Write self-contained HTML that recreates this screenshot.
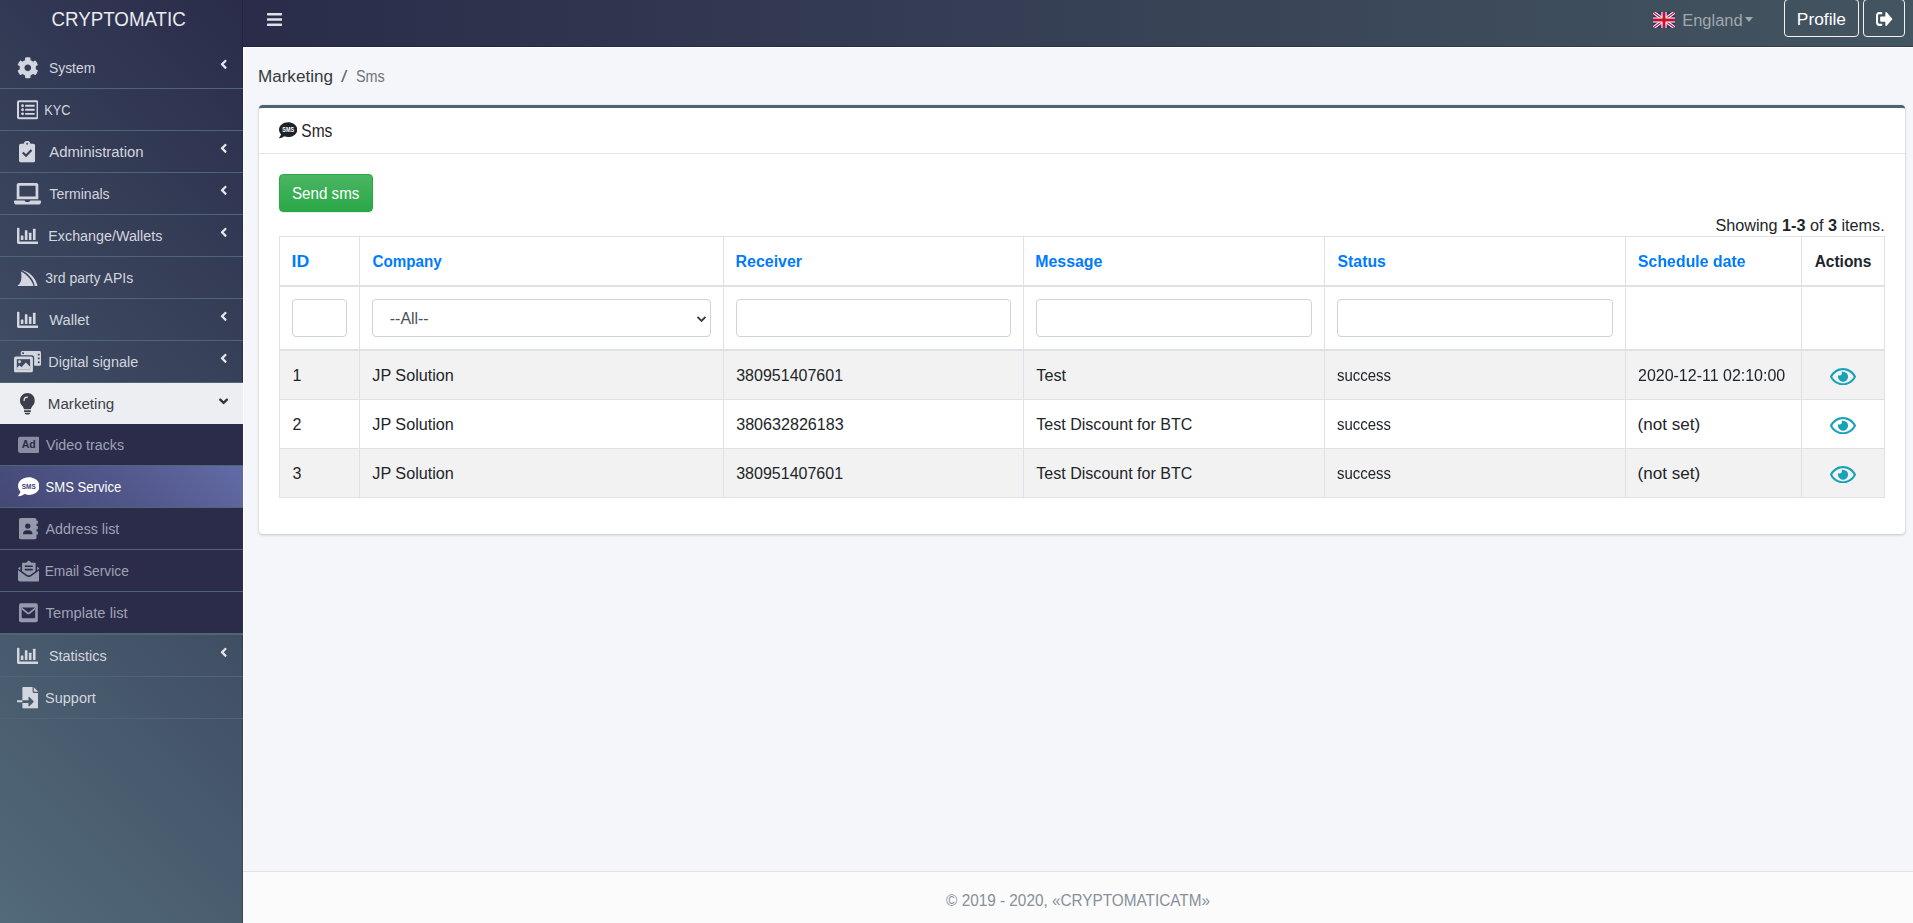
<!DOCTYPE html>
<html lang="en">
<head>
<meta charset="utf-8">
<title>Sms - CRYPTOMATIC</title>
<style>
*{box-sizing:border-box}
html,body{margin:0;padding:0}
body{width:1913px;height:923px;overflow:hidden;position:relative;background:#f4f6f9;
  font-family:"Liberation Sans","DejaVu Sans",sans-serif;font-size:16px;line-height:24px;color:#212529}
a{text-decoration:none;color:inherit}
ul{list-style:none;margin:0;padding:0}
.t{display:inline-block;white-space:nowrap;transform-origin:0 50%}
svg{display:block}

/* ---------- sidebar ---------- */
.sidebar{position:absolute;left:0;top:0;width:243px;height:923px;z-index:2;box-shadow:inset -1px 0 0 rgba(10,16,40,.28);
  background:linear-gradient(45deg,#526a79 0%,#2a2c4a 100%);}
.brand{display:block;height:47px;color:#e9ebf0;font-size:20px;line-height:47px;position:relative}
.brand .t{position:absolute;left:51.5px;top:-3.6px}
.menu>li{border-bottom:1px solid #4d6575;position:relative}
.menu>li>a{display:block;height:41px;line-height:41px;font-size:14px;color:#d3d6df;position:relative}
.menu a .ic{position:absolute;left:0;top:0;width:55px;height:41px}
.menu a .ic svg{position:absolute}
.menu a .t{position:absolute;top:1.3px;left:48.6px}
.menu a.noarr .t{left:45.4px}
.menu a .arr{position:absolute;left:219.9px;top:10.4px;width:7.4px;height:14.7px;color:#e4e6ec}
.menu li.open>a{background:#edeef1;color:#3a3f4b}
.menu li.open>a .arr{left:219.1px;top:10.7px;width:9.2px;height:14.7px;color:#2f3440}
.sub{background:#2a2c4a}
.sub>li{border-bottom:1px solid #4d6575;height:42px}
.sub a .ic{left:1.1px;top:0.3px;color:#9499ac}
.sub>li>a{display:block;height:41px;line-height:41px;font-size:14px;color:#9ea3b5;position:relative}
.sub>li>a .t{left:46px}
.sub>li.active>a .ic{color:#fff}
.sub>li.active>a{background:linear-gradient(45deg,#434874 0%,#51578a 50%,#636ba7 100%);color:#fff}

/* ---------- navbar ---------- */
.navbar{position:absolute;left:243px;top:0;width:1670px;height:47px;
  background:linear-gradient(90deg,#2a2c4a 0%,#435560 100%);box-shadow:inset 0 -1px 0 rgba(10,16,40,.3)}
.burger{position:absolute;left:23.5px;top:12.7px;width:15px;height:13px}
.lang{position:absolute;left:1409.5px;top:0;height:47px;color:#a0a7af;font-size:16px}
.lang .flag{position:absolute;left:0;top:12px;width:22px;height:16px}
.lang .t{position:absolute;left:30px;top:9.4px;line-height:24px}
.lang .caret{position:absolute;left:92.8px;top:17.2px;width:0;height:0;border-left:4.9px solid transparent;border-right:4.9px solid transparent;border-top:5px solid #a0a7af}
.nbtn{position:absolute;top:-1px;height:38px;border:1px solid #f1f3f5;border-radius:4px;color:#fff;font-size:16px}
.nbtn.profile{left:1540.6px;width:75.4px}
.nbtn.profile .t{position:absolute;left:13px;top:7.6px;line-height:24px}
.nbtn.logout{left:1620px;width:41.8px}
.nbtn.logout svg{position:absolute;left:12px;top:11.6px;width:16.6px;height:14px}

/* ---------- content ---------- */
.wrap{position:absolute;left:243px;top:47px;width:1670px;height:824px;border-left:1px solid #fff;border-top:1px solid #fff;background:#f4f6f9}
.crumbs{position:absolute;left:259px;top:65px;height:24px;font-size:16px;line-height:24px;color:#343a40;white-space:nowrap}
.crumbs .t{position:absolute;top:0}
.crumbs .sep,.crumbs .cur{color:#6c757d}
.card{position:absolute;left:259px;top:105px;width:1646px;height:429px;background:#fff;border-top:3px solid #4b6373;border-radius:4px;
  box-shadow:0 0 1px rgba(0,0,0,.125),0 1px 3px rgba(0,0,0,.2)}
.card-header{position:relative;height:46px;border-bottom:1px solid #e4e6e9}
.card-header svg{position:absolute;left:19.7px;top:12.8px;width:18.3px;height:18.3px}
.card-header .t{position:absolute;left:42.2px;top:10.6px;font-size:17.6px;line-height:24px;color:#1f2327}
.btn{position:absolute;left:20px;top:66px;width:94px;height:38px;border-radius:4px;border:1px solid #28a745;
  background:linear-gradient(180deg,#4bb563,#2aa847);color:#fff;box-shadow:0 1px 1px rgba(0,0,0,.075)}
.btn .t{position:absolute;left:12.2px;top:6.8px;line-height:24px}
.summary{position:absolute;left:1457.4px;top:105.8px;line-height:24px;white-space:nowrap}
.summary b{font-weight:700}

table.grid{position:absolute;left:20px;top:128px;width:1606px;border-collapse:separate;border-spacing:0;table-layout:fixed;
  border-left:1px solid #dee2e6;border-top:1px solid #dee2e6}
.grid th,.grid td{border-right:1px solid #dee2e6;border-bottom:1px solid #dee2e6;padding:0 0 0 12px;text-align:left;vertical-align:middle;
  font-weight:400;line-height:24px;white-space:nowrap;overflow:hidden}
.grid thead th{height:50px;border-bottom-width:2px;font-weight:700;color:#007bff}
.grid thead th.plain{color:#212529}
.grid thead td{height:64px;border-bottom-width:2px}
.grid tbody td{height:49px}
.grid tbody tr:nth-child(odd) td{background:#f2f2f2}
.grid th .t,.grid td .t{position:relative;top:1.4px}
.inp{display:block;height:38px;border:1px solid #ced4da;border-radius:4px;background:#fff;position:relative}
.inp.sel .t{position:absolute;left:16.6px;top:6.8px;color:#495057}
.inp.sel svg{position:absolute;right:3.4px;top:14.6px;width:11px;height:8px}
.eye{width:26px;height:17.4px;margin-left:16.1px;position:relative;top:1.7px}

.footer{position:absolute;left:243px;top:871px;width:1670px;height:52px;background:#fbfbfc;border-top:1px solid #dee2e6;color:#869099}
.footer .t{position:absolute;left:703px;top:17px;line-height:24px}
</style>
</head>
<body>
<aside class="sidebar">
  <a class="brand" href="#"><span class="t" style="transform:translateX(-0.54px) scaleX(0.9372)">CRYPTOMATIC</span></a>
  <ul class="menu">
    <li><a href="#"><span class="ic"><svg style="left:16.7px;top:10.2px" width="21.6" height="21.6" viewBox="0 0 512 512" fill="currentColor"><path d="M487.4 315.7l-42.600-24.600c4.300-23.200 4.300-47 0-70.200l42.600-24.600c4.900-2.800 7.100-8.600 5.500-14-11.100-35.600-30-67.800-54.700-94.600-3.800-4.100-10-5.100-14.800-2.300L380.800 110c-17.900-15.400-38.500-27.300-60.800-35.100V25.800c0-5.600-3.900-10.500-9.400-11.700-36.700-8.200-74.300-7.800-109.200 0-5.500 1.200-9.400 6.100-9.400 11.700V75c-22.200 7.900-42.800 19.800-60.800 35.100L88.700 85.500c-4.900-2.800-11-1.900-14.800 2.300-24.700 26.700-43.600 58.900-54.700 94.600-1.700 5.400.6 11.200 5.500 14L67.300 221c-4.300 23.200-4.300 47 0 70.200l-42.600 24.600c-4.900 2.800-7.100 8.600-5.500 14 11.100 35.600 30 67.800 54.700 94.600 3.800 4.100 10 5.100 14.800 2.300l42.600-24.600c17.900 15.400 38.500 27.300 60.800 35.100v49.200c0 5.600 3.900 10.500 9.400 11.700 36.700 8.200 74.300 7.800 109.200 0 5.500-1.200 9.400-6.100 9.400-11.700v-49.200c22.200-7.900 42.800-19.800 60.800-35.100l42.600 24.600c4.900 2.800 11 1.900 14.800-2.300 24.700-26.700 43.600-58.900 54.700-94.600 1.500-5.500-.7-11.300-5.600-14.100zM256 336c-44.100 0-80-35.900-80-80s35.900-80 80-80 80 35.900 80 80-35.900 80-80 80z"/></svg></span><span class="t" style="transform:translateX(-0.09px) scaleX(0.9932)">System</span><svg class="arr" viewBox="0 0 256 512" fill="currentColor"><path d="M31.700 239l136-136c9.400-9.400 24.600-9.400 33.900 0l22.600 22.600c9.400 9.400 9.400 24.600 0 33.900L127.900 256l96.400 96.400c9.400 9.400 9.400 24.600 0 33.900L201.700 409c-9.400 9.400-24.600 9.400-33.900 0l-136-136c-9.500-9.400-9.500-24.600-.1-34z"/></svg></a></li>
    <li><a href="#" class="noarr"><span class="ic"><svg style="left:16.7px;top:10.2px" width="21.6" height="21.6" viewBox="0 0 512 512" fill="currentColor"><rect x="24" y="56" width="464" height="400" rx="26" fill="none" stroke="currentColor" stroke-width="48"/><circle cx="132" cy="160" r="34"/><circle cx="132" cy="256" r="34"/><circle cx="132" cy="352" r="34"/><rect x="192" y="138" width="228" height="44" rx="10"/><rect x="192" y="234" width="228" height="44" rx="10"/><rect x="192" y="330" width="228" height="44" rx="10"/></svg></span><span class="t" style="transform:translateX(-0.81px) scaleX(0.9178)">KYC</span></a></li>
    <li><a href="#"><span class="ic"><svg style="left:19.4px;top:10.2px" width="16.2" height="21.6" viewBox="0 0 384 512" fill="currentColor"><mask id="mk1"><rect width="384" height="512" fill="#fff"/><circle cx="192" cy="64" r="22" fill="#000"/><path d="M108 290l58 58 112-118" fill="none" stroke="#000" stroke-width="52" stroke-linecap="square"/></mask><g mask="url(#mk1)"><rect x="0" y="64" width="384" height="448" rx="48"/><path d="M120 64a72 64 0 0 1 144 0h30v64H90V64z"/><circle cx="192" cy="62" r="62"/></g></svg></span><span class="t" style="transform:translateX(0.21px) scaleX(1.0646)">Administration</span><svg class="arr" viewBox="0 0 256 512" fill="currentColor"><path d="M31.700 239l136-136c9.400-9.400 24.600-9.400 33.900 0l22.600 22.600c9.400 9.400 9.400 24.600 0 33.900L127.900 256l96.400 96.400c9.400 9.400 9.400 24.600 0 33.900L201.700 409c-9.400 9.400-24.600 9.400-33.900 0l-136-136c-9.500-9.400-9.500-24.600-.1-34z"/></svg></a></li>
    <li><a href="#"><span class="ic"><svg style="left:14px;top:10.2px" width="27" height="21.6" viewBox="0 0 640 512" fill="currentColor"><path d="M624 416H381.540c-.74 19.810-14.710 32-32.740 32H288c-18.690 0-33.020-17.470-32.770-32H16c-8.800 0-16 7.200-16 16v16c0 35.200 28.800 64 64 64h512c35.200 0 64-28.800 64-64v-16c0-8.800-7.200-16-16-16zM576 48c0-26.400-21.600-48-48-48H112C85.600 0 64 21.600 64 48v336h512V48zm-64 272H128V64h384v256z"/></svg></span><span class="t" style="transform:translateX(0.41px) scaleX(1.0050)">Terminals</span><svg class="arr" viewBox="0 0 256 512" fill="currentColor"><path d="M31.700 239l136-136c9.400-9.400 24.600-9.400 33.900 0l22.600 22.600c9.400 9.400 9.400 24.600 0 33.900L127.900 256l96.400 96.400c9.400 9.400 9.400 24.600 0 33.900L201.700 409c-9.400 9.400-24.600 9.400-33.900 0l-136-136c-9.500-9.400-9.500-24.600-.1-34z"/></svg></a></li>
    <li><a href="#"><span class="ic"><svg style="left:16.700px;top:10.200px" width="21.600" height="21.600" viewBox="0 0 512 512" fill="currentColor"><path d="M0 80a16 16 0 0 1 16-16h26a16 16 0 0 1 16 16v310h438a16 16 0 0 1 16 16v26a16 16 0 0 1-16 16H32a32 32 0 0 1-32-32z"/><rect x="90" y="250" width="62" height="108" rx="12"/><rect x="186" y="122" width="62" height="236" rx="12"/><rect x="282" y="186" width="62" height="172" rx="12"/><rect x="378" y="90" width="62" height="268" rx="12"/></svg></span><span class="t" style="transform:translateX(-0.72px) scaleX(1.0223)">Exchange/Wallets</span><svg class="arr" viewBox="0 0 256 512" fill="currentColor"><path d="M31.700 239l136-136c9.400-9.400 24.600-9.400 33.900 0l22.600 22.600c9.400 9.400 9.400 24.600 0 33.900L127.900 256l96.400 96.400c9.400 9.400 9.400 24.600 0 33.900L201.700 409c-9.400 9.400-24.600 9.400-33.900 0l-136-136c-9.500-9.400-9.500-24.600-.1-34z"/></svg></a></li>
    <li><a href="#" class="noarr"><span class="ic"><svg style="left:17.4px;top:12.6px" width="20.6" height="16.2" viewBox="0 0 206 162" fill="currentColor"><path d="M44 0C124 14 190 78 206 162H178C168 98 118 36 44 0z"/><path d="M40 16C102 48 152 104 166 162H0C32 142 54 106 40 16z"/></svg></span><span class="t" style="transform:translateX(0.31px) scaleX(0.9988)">3rd party APIs</span></a></li>
    <li><a href="#"><span class="ic"><svg style="left:16.700px;top:10.200px" width="21.600" height="21.600" viewBox="0 0 512 512" fill="currentColor"><path d="M0 80a16 16 0 0 1 16-16h26a16 16 0 0 1 16 16v310h438a16 16 0 0 1 16 16v26a16 16 0 0 1-16 16H32a32 32 0 0 1-32-32z"/><rect x="90" y="250" width="62" height="108" rx="12"/><rect x="186" y="122" width="62" height="236" rx="12"/><rect x="282" y="186" width="62" height="172" rx="12"/><rect x="378" y="90" width="62" height="268" rx="12"/></svg></span><span class="t" style="transform:translateX(0.31px) scaleX(1.0445)">Wallet</span><svg class="arr" viewBox="0 0 256 512" fill="currentColor"><path d="M31.700 239l136-136c9.400-9.400 24.600-9.400 33.900 0l22.600 22.600c9.400 9.400 9.400 24.600 0 33.900L127.900 256l96.400 96.400c9.400 9.400 9.400 24.600 0 33.900L201.700 409c-9.400 9.400-24.600 9.400-33.900 0l-136-136c-9.500-9.400-9.500-24.600-.1-34z"/></svg></a></li>
    <li><a href="#"><span class="ic"><svg style="left:14px;top:10.2px" width="27" height="21.6" viewBox="0 0 640 512" fill="currentColor"><mask id="mk2"><rect width="640" height="512" fill="#fff"/><rect x="-30" y="98" width="508" height="444" rx="60" fill="#000"/><rect x="564" y="64" width="44" height="44" rx="8" fill="#000"/><rect x="564" y="154" width="44" height="44" rx="8" fill="#000"/><rect x="564" y="244" width="44" height="44" rx="8" fill="#000"/><rect x="192" y="32" width="44" height="40" rx="8" fill="#000"/></mask><rect x="160" y="0" width="480" height="352" rx="36" mask="url(#mk2)"/><mask id="mk3"><rect width="640" height="512" fill="#fff"/><rect x="66" y="194" width="316" height="252" fill="#000"/><circle cx="132" cy="256" r="34" fill="#fff"/><path d="M66 446v-44l64-64 46 46 104-112 102 104v70z" fill="#fff"/></mask><rect x="0" y="128" width="448" height="384" rx="44" mask="url(#mk3)"/></svg></span><span class="t" style="transform:translateX(-0.73px) scaleX(1.0316)">Digital signale</span><svg class="arr" viewBox="0 0 256 512" fill="currentColor"><path d="M31.700 239l136-136c9.400-9.400 24.600-9.400 33.900 0l22.600 22.600c9.400 9.400 9.400 24.600 0 33.900L127.900 256l96.400 96.400c9.400 9.400 9.400 24.600 0 33.900L201.700 409c-9.400 9.400-24.600 9.400-33.900 0l-136-136c-9.500-9.400-9.500-24.600-.1-34z"/></svg></a></li>
    <li class="open"><a href="#"><span class="ic"><svg style="left:20.1px;top:10.2px" width="14.85" height="21.6" viewBox="0 0 352 512" fill="currentColor"><mask id="mk4"><rect width="352" height="512" fill="#fff"/><path d="M96 176a80 80 0 0 1 80-80" fill="none" stroke="#000" stroke-width="30" stroke-linecap="round"/></mask><path mask="url(#mk4)" d="M176 0C78 0 0 78 0 176c0 46 16 86 46 118 20 22 50 68 50 90h160c0-22 30-68 50-90 30-32 46-72 46-118C352 78 274 0 176 0z"/><rect x="96" y="408" width="160" height="44" rx="6"/><path d="M106 466h140l-18 34a24 24 0 0 1-20 12h-64a24 24 0 0 1-20-12z"/></svg></span><span class="t" style="transform:translateX(-1.17px) scaleX(1.0807)">Marketing</span><svg class="arr" viewBox="0 0 320 512" fill="currentColor"><path d="M143 352.300L7 216.300c-9.400-9.400-9.400-24.600 0-33.900l22.600-22.600c9.400-9.400 24.600-9.400 33.900 0l96.400 96.400 96.400-96.400c9.400-9.400 24.600-9.400 33.900 0l22.600 22.600c9.400 9.400 9.400 24.600 0 33.900l-136 136c-9.200 9.400-24.400 9.400-33.800 0z"/></svg></a>
      <ul class="sub">
        <li><a href="#" class="noarr"><span class="ic"><svg style="left:16.7px;top:9.6px" width="21.6" height="21.6" viewBox="0 0 512 512"><rect x="0" y="64" width="512" height="384" rx="48" fill="#888da2"/><text x="256" y="340" text-anchor="middle" font-family="Liberation Sans, sans-serif" font-weight="700" font-size="250" fill="#2a2c4a">Ad</text></svg></span><span class="t" style="transform:translateX(0.91px) scaleX(1.0172)">Video tracks</span></a></li>
        <li class="active"><a href="#" class="noarr"><span class="ic"><svg style="left:16.7px;top:10.2px" width="21.6" height="21.6" viewBox="0 0 512 512"><path fill="currentColor" d="M256 32C114.600 32 0 125.100 0 240c0 49.600 21.400 95 57 130.700C44.500 421.100 2.700 466 2.200 466.500c-2.200 2.300-2.800 5.700-1.500 8.700S4.800 480 8 480c66.300 0 116-31.800 140.600-51.400 32.700 12.300 69 19.400 107.400 19.400 141.400 0 256-93.100 256-208S397.400 32 256 32z"/><text x="256" y="306" text-anchor="middle" textLength="330" lengthAdjust="spacingAndGlyphs" font-family="Liberation Sans, sans-serif" font-weight="700" font-size="186" fill="#3d4275">SMS</text></svg></span><span class="t" style="transform:translateX(0.61px) scaleX(0.9344)">SMS Service</span></a></li>
        <li><a href="#" class="noarr"><span class="ic"><svg style="left:18.1px;top:10.2px" width="18.9" height="21.6" viewBox="0 0 448 512" fill="currentColor"><mask id="mk5"><rect width="448" height="512" fill="#fff"/><circle cx="208" cy="192" r="64" fill="#000"/><path d="M96 372c0-50 40-84 80-84h64c40 0 80 34 80 84v12H96z" fill="#000"/></mask><rect x="0" y="0" width="416" height="512" rx="48" mask="url(#mk5)"/><rect x="400" y="64" width="48" height="72" rx="12"/><rect x="400" y="192" width="48" height="72" rx="12"/><rect x="400" y="320" width="48" height="72" rx="12"/></svg></span><span class="t" style="transform:translateX(0.61px) scaleX(1.0184)">Address list</span></a></li>
        <li><a href="#" class="noarr"><span class="ic"><svg style="left:16.7px;top:10.2px" width="21.6" height="21.6" viewBox="0 0 512 512" fill="currentColor"><mask id="mk6"><rect width="512" height="512" fill="#fff"/><rect x="160" y="128" width="192" height="40" rx="10" fill="#000"/><rect x="160" y="208" width="192" height="40" rx="10" fill="#000"/></mask><path mask="url(#mk6)" d="M96 64h100l40-40c12-12 28-12 40 0l40 40h100v200l-116 84c-28 20-60 20-88 0L96 264z"/><path d="M0 200l56-48v92zM512 200l-56-48v92z"/><path d="M0 240l190 140c40 28 92 28 132 0l190-140v224a48 48 0 0 1-48 48H48a48 48 0 0 1-48-48z"/></svg></span><span class="t" style="transform:translateX(-0.37px) scaleX(0.9836)">Email Service</span></a></li>
        <li><a href="#" class="noarr"><span class="ic"><svg style="left:18.1px;top:10.2px" width="18.9" height="21.6" viewBox="0 0 448 512" fill="currentColor"><mask id="mk7"><rect width="448" height="512" fill="#fff"/><rect x="64" y="128" width="320" height="256" rx="20" fill="#000"/><path d="M64 152l136 108c14 11 34 11 48 0l136-108" fill="none" stroke="#fff" stroke-width="40"/></mask><rect x="0" y="32" width="448" height="448" rx="48" mask="url(#mk7)"/></svg></span><span class="t" style="transform:translateX(0.61px) scaleX(1.0550)">Template list</span></a></li>
      </ul>
    </li>
    <li><a href="#"><span class="ic"><svg style="left:16.700px;top:10.200px" width="21.600" height="21.600" viewBox="0 0 512 512" fill="currentColor"><path d="M0 80a16 16 0 0 1 16-16h26a16 16 0 0 1 16 16v310h438a16 16 0 0 1 16 16v26a16 16 0 0 1-16 16H32a32 32 0 0 1-32-32z"/><rect x="90" y="250" width="62" height="108" rx="12"/><rect x="186" y="122" width="62" height="236" rx="12"/><rect x="282" y="186" width="62" height="172" rx="12"/><rect x="378" y="90" width="62" height="268" rx="12"/></svg></span><span class="t" style="transform:translateX(-0.09px) scaleX(1.0301)">Statistics</span><svg class="arr" viewBox="0 0 256 512" fill="currentColor"><path d="M31.700 239l136-136c9.400-9.400 24.600-9.400 33.900 0l22.600 22.600c9.400 9.400 9.400 24.600 0 33.900L127.900 256l96.400 96.400c9.400 9.400 9.400 24.600 0 33.900L201.700 409c-9.400 9.400-24.600 9.400-33.900 0l-136-136c-9.500-9.400-9.500-24.600-.1-34z"/></svg></a></li>
    <li><a href="#" class="noarr"><span class="ic"><svg style="left:16.7px;top:10.2px" width="21.6" height="21.6" viewBox="0 0 512 512" fill="currentColor"><mask id="mk8"><rect width="512" height="512" fill="#fff"/><path d="M384 0v104a24 24 0 0 0 24 24h104" fill="none" stroke="#000" stroke-width="28"/><path d="M100 312h172v-66c0-12 14-18 22-10l100 100c6 6 6 14 0 20l-100 100c-8 8-22 2-22-10v-66H100z" fill="#000"/></mask><path mask="url(#mk8)" d="M152 0h240l120 120v368a24 24 0 0 1-24 24H152a24 24 0 0 1-24-24V24a24 24 0 0 1 24-24z"/><rect x="0" y="312" width="128" height="48" rx="10"/></svg></span><span class="t" style="transform:translateX(0.11px) scaleX(1.0337)">Support</span></a></li>
  </ul>
</aside>

<nav class="navbar">
  <a href="#" class="burger"><svg width="15" height="13" viewBox="0 60 448 392" preserveAspectRatio="none" fill="#dfe1e8"><path d="M16 132h416c8.837 0 16-7.163 16-16V76c0-8.837-7.163-16-16-16H16C7.163 60 0 67.163 0 76v40c0 8.837 7.163 16 16 16zm0 160h416c8.837 0 16-7.163 16-16v-40c0-8.837-7.163-16-16-16H16c-8.837 0-16 7.163-16 16v40c0 8.837 7.163 16 16 16zm0 160h416c8.837 0 16-7.163 16-16v-40c0-8.837-7.163-16-16-16H16c-8.837 0-16 7.163-16 16v40c0 8.837 7.163 16 16 16z"/></svg></a>
  <div class="lang">
    <svg class="flag" viewBox="0 0 60 44" preserveAspectRatio="none"><rect width="60" height="44" fill="#2d3179"/><path d="M0 0L60 44M60 0L0 44" stroke="#fff" stroke-width="9"/><path d="M0 0L60 44M60 0L0 44" stroke="#c8102e" stroke-width="3.4"/><path d="M30 0V44M0 22H60" stroke="#fff" stroke-width="14"/><path d="M30 0V44M0 22H60" stroke="#c8102e" stroke-width="8"/></svg>
    <span class="t" style="transform:translateX(-0.83px) scaleX(1.0296)">England</span><span class="caret"></span>
  </div>
  <a href="#" class="nbtn profile"><span class="t" style="transform:translateX(-1.18px) scaleX(1.0843)">Profile</span></a>
  <a href="#" class="nbtn logout"><svg viewBox="0 64 512 384" preserveAspectRatio="none" fill="#fff"><path d="M497 273L329 441c-15 15-41 4.500-41-17v-96H152c-13.300 0-24-10.700-24-24v-96c0-13.300 10.700-24 24-24h136V88c0-21.400 25.900-32 41-17l168 168c9.300 9.400 9.300 24.600 0 34zM192 436v-40c0-6.600-5.400-12-12-12H96c-17.700 0-32-14.300-32-32V160c0-17.700 14.300-32 32-32h84c6.600 0 12-5.400 12-12V76c0-6.600-5.400-12-12-12H96c-53 0-96 43-96 96v192c0 53 43 96 96 96h84c6.600 0 12-5.400 12-12z"/></svg></a>
</nav>

<div class="wrap"></div>
<div class="crumbs"><span class="t" style="left:0.3px;transform:translateX(-1.06px) scaleX(1.0680)">Marketing</span><span class="t sep" style="left:81.5px;transform:translateX(0.00px) scaleX(1.4600)">/</span><span class="t cur" style="left:96.6px;transform:translateX(0.01px) scaleX(0.9000)">Sms</span></div>
<section class="card">
  <div class="card-header"><svg viewBox="0 0 512 512"><path fill="#1f2327" d="M256 32C114.600 32 0 125.100 0 240c0 49.600 21.400 95 57 130.700C44.500 421.100 2.700 466 2.200 466.500c-2.200 2.300-2.800 5.700-1.500 8.700S4.800 480 8 480c66.300 0 116-31.800 140.600-51.400 32.700 12.300 69 19.400 107.400 19.400 141.400 0 256-93.100 256-208S397.400 32 256 32z"/><text x="256" y="306" text-anchor="middle" textLength="330" lengthAdjust="spacingAndGlyphs" font-family="Liberation Sans, sans-serif" font-weight="700" font-size="186" fill="#fff">SMS</text></svg><span class="t" style="transform:translateX(0.31px) scaleX(0.8816)">Sms</span></div>
  <a href="#" class="btn"><span class="t" style="transform:translateX(0.01px) scaleX(0.9460)">Send sms</span></a>
  <div class="summary"><span class="t" style="transform:translateX(-0.50px) scaleX(1.0119)">Showing <b>1-3</b> of <b>3</b> items.</span></div>
  <table class="grid">
    <colgroup><col style="width:80px"><col style="width:364px"><col style="width:300px"><col style="width:301px"><col style="width:301px"><col style="width:176px"><col style="width:83px"></colgroup>
    <thead>
      <tr><th><span class="t" style="transform:translateX(-0.50px) scaleX(1.1007)">ID</span></th><th><span class="t" style="transform:translateX(0.50px) scaleX(0.9493)">Company</span></th><th><span class="t" style="transform:translateX(-0.40px) scaleX(0.9955)">Receiver</span></th><th><span class="t" style="transform:translateX(-0.69px) scaleX(0.9926)">Message</span></th><th><span class="t" style="transform:translateX(0.60px) scaleX(0.9857)">Status</span></th><th><span class="t" style="transform:translateX(0.00px) scaleX(0.9919)">Schedule date</span></th><th class="plain"><span class="t" style="transform:translateX(0.70px) scaleX(0.9664)">Actions</span></th></tr>
      <tr><td><span class="inp" style="width:55px"></span></td><td><span class="inp sel" style="width:339px"><span class="t" style="transform:translateX(-0.19px) scaleX(0.9931)">--All--</span><svg viewBox="0 0 11 8"><path d="M1.500 1.800L5.500 5.800L9.500 1.800" fill="none" stroke="#343a40" stroke-width="1.900"/></svg></span></td><td><span class="inp" style="width:275px"></span></td><td><span class="inp" style="width:276px"></span></td><td><span class="inp" style="width:276px"></span></td><td></td><td></td></tr>
    </thead>
    <tbody>
      <tr><td><span class="t" style="transform:translateX(0.40px) scaleX(1.0000)">1</span></td><td><span class="t" style="transform:translateX(0.30px) scaleX(1.0108)">JP Solution</span></td><td><span class="t" style="transform:translateX(0.20px) scaleX(1.0011)">380951407601</span></td><td><span class="t" style="transform:translateX(0.30px) scaleX(1.0134)">Test</span></td><td><span class="t" style="transform:translateX(0.00px) scaleX(0.9360)">success</span></td><td><span class="t" style="transform:translateX(0.00px) scaleX(0.9987)">2020-12-11 02:10:00</span></td><td><svg class="eye" viewBox="0 64 576 384" fill="#17a2b8"><path d="M288 144a110.940 110.940 0 0 0-31.240 5 55.400 55.400 0 0 1 7.240 27 56 56 0 0 1-56 56 55.400 55.400 0 0 1-27-7.240A111.710 111.710 0 1 0 288 144zm284.520 97.400C518.290 135.590 410.930 64 288 64S57.680 135.640 3.480 241.410a32.350 32.350 0 0 0 0 29.190C57.710 376.410 165.070 448 288 448s230.320-71.640 284.520-177.410a32.350 32.350 0 0 0 0-29.190zM288 400c-98.650 0-189.090-55-237.930-144C98.910 167 189.340 112 288 112s189.090 55 237.930 144C477.100 345 386.660 400 288 400z"/></svg></td></tr>
      <tr><td><span class="t" style="transform:translateX(0.60px) scaleX(1.0000)">2</span></td><td><span class="t" style="transform:translateX(0.30px) scaleX(1.0108)">JP Solution</span></td><td><span class="t" style="transform:translateX(0.20px) scaleX(1.0067)">380632826183</span></td><td><span class="t" style="transform:translateX(0.30px) scaleX(1.0029)">Test Discount for BTC</span></td><td><span class="t" style="transform:translateX(0.00px) scaleX(0.9360)">success</span></td><td><span class="t" style="transform:translateX(-0.47px) scaleX(1.0687)">(not set)</span></td><td><svg class="eye" viewBox="0 64 576 384" fill="#17a2b8"><path d="M288 144a110.940 110.940 0 0 0-31.240 5 55.400 55.400 0 0 1 7.240 27 56 56 0 0 1-56 56 55.400 55.400 0 0 1-27-7.240A111.710 111.710 0 1 0 288 144zm284.520 97.400C518.290 135.590 410.930 64 288 64S57.680 135.640 3.480 241.410a32.350 32.350 0 0 0 0 29.190C57.710 376.410 165.070 448 288 448s230.320-71.640 284.520-177.410a32.350 32.350 0 0 0 0-29.190zM288 400c-98.650 0-189.090-55-237.930-144C98.910 167 189.340 112 288 112s189.090 55 237.930 144C477.100 345 386.660 400 288 400z"/></svg></td></tr>
      <tr><td><span class="t" style="transform:translateX(0.60px) scaleX(1.0000)">3</span></td><td><span class="t" style="transform:translateX(0.30px) scaleX(1.0108)">JP Solution</span></td><td><span class="t" style="transform:translateX(0.20px) scaleX(1.0011)">380951407601</span></td><td><span class="t" style="transform:translateX(0.30px) scaleX(1.0029)">Test Discount for BTC</span></td><td><span class="t" style="transform:translateX(0.00px) scaleX(0.9360)">success</span></td><td><span class="t" style="transform:translateX(-0.47px) scaleX(1.0687)">(not set)</span></td><td><svg class="eye" viewBox="0 64 576 384" fill="#17a2b8"><path d="M288 144a110.940 110.940 0 0 0-31.240 5 55.400 55.400 0 0 1 7.240 27 56 56 0 0 1-56 56 55.400 55.400 0 0 1-27-7.240A111.710 111.710 0 1 0 288 144zm284.520 97.400C518.290 135.590 410.930 64 288 64S57.680 135.640 3.480 241.410a32.350 32.350 0 0 0 0 29.190C57.710 376.410 165.070 448 288 448s230.320-71.640 284.520-177.410a32.350 32.350 0 0 0 0-29.190zM288 400c-98.650 0-189.090-55-237.930-144C98.910 167 189.340 112 288 112s189.090 55 237.930 144C477.100 345 386.660 400 288 400z"/></svg></td></tr>
    </tbody>
  </table>
</section>
<footer class="footer"><span class="t" style="transform:translateX(0.10px) scaleX(0.9576)">© 2019 - 2020, «CRYPTOMATICATM»</span></footer>

</body>
</html>
